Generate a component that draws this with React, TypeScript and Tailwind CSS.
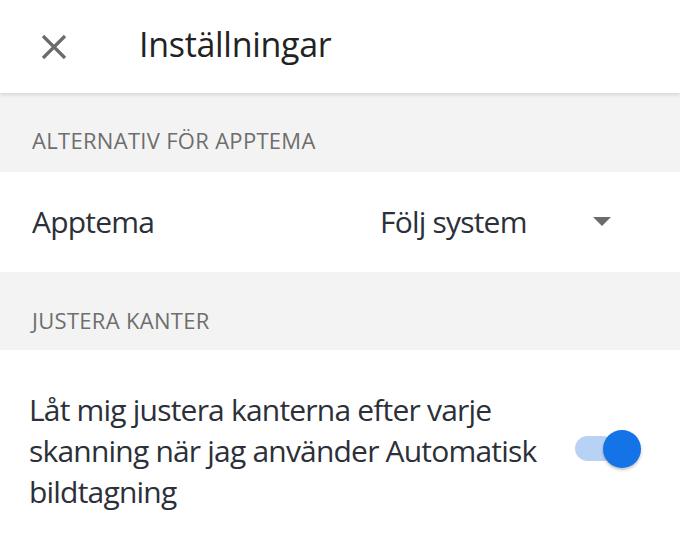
import React from "react";

export default function App() {
  return (
    <div className="w-[680px] h-[536px] overflow-hidden bg-white" style={{ fontFamily: "'Open Sans', sans-serif" }}>
      <header className="relative z-10 h-[93px] bg-white flex items-center shadow-[0_2px_4px_rgba(0,0,0,0.12)]">
        <div className="w-[139px] flex items-center pl-[41px]">
          <svg width="26" height="26" viewBox="0 0 26 26">
            <path d="M2 2 L24 24 M24 2 L2 24" stroke="#6b6b6b" strokeWidth="3.2" strokeLinecap="butt" />
          </svg>
        </div>
        <h1 className="text-[34px] leading-[40px] text-[#222222] tracking-[-0.3px] mt-[-6px]">Inställningar</h1>
      </header>
      <div className="h-[79px] bg-[#f3f3f3] flex items-end pb-[17px] pl-[32px]">
        <span className="text-[22px] leading-[30px] text-[#6e6e6e] tracking-[0.3px]">ALTERNATIV FÖR APPTEMA</span>
      </div>
      <div className="h-[100px] flex items-center pl-[32px]">
        <span className="w-[348px] text-[30px] leading-[40px] text-[#2c3038] tracking-[-0.8px]">Apptema</span>
        <span className="text-[30px] leading-[40px] text-[#2c3038] tracking-[-0.8px]">Följ system</span>
        <svg className="ml-auto mr-[69px]" width="18" height="10" viewBox="0 0 18 10">
          <path d="M0 0 H18 L9 9 Z" fill="#6b6b6b" />
        </svg>
      </div>
      <div className="h-[78px] bg-[#f3f3f3] flex items-end pb-[15px] pl-[32px]">
        <span className="text-[22px] leading-[30px] text-[#6e6e6e] tracking-[0.3px]">JUSTERA KANTER</span>
      </div>
      <div className="flex items-center pl-[29px] pt-[39px]">
        <p className="w-[530px] text-[30px] leading-[41px] text-[#2c3038] tracking-[-0.8px]">
          Låt mig justera kanterna efter varje skanning när jag använder Automatisk bildtagning
        </p>
        <div className="relative ml-[16px] mb-[4px] w-[67px] h-[38px] flex items-center">
          <div className="w-[40px] h-[25px] rounded-full bg-[#b8d2f5]" />
          <div className="absolute left-[28px] top-0 w-[38px] h-[38px] rounded-full bg-[#1473e6] shadow-[0_2px_3px_rgba(0,0,0,0.25)]" />
        </div>
      </div>
    </div>
  );
}
